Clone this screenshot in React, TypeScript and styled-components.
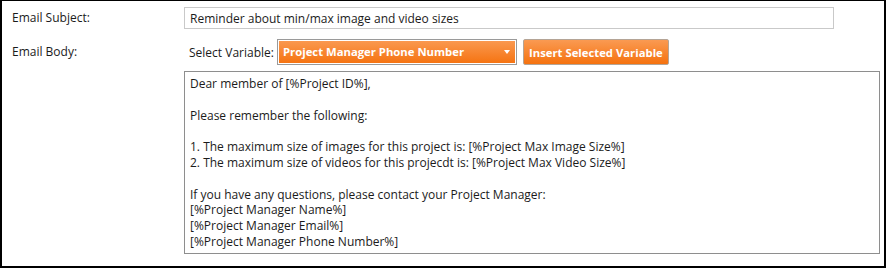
import React, { useState } from 'react';
import styled, { createGlobalStyle } from 'styled-components';

const GlobalStyle = createGlobalStyle`
  html, body {
    margin: 0;
    padding: 0;
    background: #ffffff;
  }
  body {
    font-family: "Open Sans", "Liberation Sans", sans-serif;
    font-size: 12px;
    color: #1b1b1b;
  }
`;

const Panel = styled.div`
  box-sizing: border-box;
  width: 886px;
  height: 268px;
  border: 2px solid #000;
  border-top-width: 1px;
  padding: 6px 5px 0 10px;
  display: grid;
  grid-template-columns: 172px 1fr;
  row-gap: 10px;
  align-items: start;
  align-content: start;
`;

const Label = styled.div<{ $offset?: number }>`
  line-height: 22px;
  height: 22px;
  padding-top: ${(p) => p.$offset ?? 0}px;
`;

const SubjectInput = styled.input`
  box-sizing: border-box;
  width: 650px;
  height: 22px;
  border: 1px solid #c9c9c9;
  padding: 0 5px;
  font: inherit;
  color: inherit;
  outline: none;
`;

const BodyColumn = styled.div`
  display: flex;
  flex-direction: column;
  gap: 6px;
`;

const Toolbar = styled.div`
  display: flex;
  align-items: center;
  height: 26px;
  padding-left: 5px;
`;

const ToolbarLabel = styled.span`
  width: 88px;
`;

const SelectBox = styled.div`
  position: relative;
  box-sizing: border-box;
  width: 240px;
  height: 26px;
  border: 1px solid #9a9a9a;
  box-shadow: inset 0 0 0 1px #ffffff;
  background: linear-gradient(#fa9a52, #f5720f);
  color: #fff;
  font-size: 11.3px;
  font-weight: 700;
  line-height: 24px;
  padding-left: 5px;
`;

const Caret = styled.span`
  position: absolute;
  right: 6px;
  top: 10px;
  width: 0;
  height: 0;
  border-left: 3px solid transparent;
  border-right: 3px solid transparent;
  border-top: 4px solid #fff;
`;

const OrangeButton = styled.button`
  box-sizing: border-box;
  margin-left: 6px;
  height: 26px;
  padding: 0 5px;
  border: 1px solid #b4a496;
  border-radius: 2px;
  background: linear-gradient(#fa9a52, #f5720f);
  color: #fff;
  font: inherit;
  font-size: 11.3px;
  font-weight: 700;
  cursor: pointer;
`;

const BodyArea = styled.div`
  box-sizing: border-box;
  width: 696px;
  height: 183px;
  border: 1px solid #8e8e8e;
  padding: 4px 5px;
  line-height: 15.8px;
  white-space: pre-wrap;
  overflow: hidden;
`;

const bodyText = `Dear member of [%Project ID%],

Please remember the following:

1. The maximum size of images for this project is: [%Project Max Image Size%]
2. The maximum size of videos for this projecdt is: [%Project Max Video Size%]

If you have any questions, please contact your Project Manager:
[%Project Manager Name%]
[%Project Manager Email%]
[%Project Manager Phone Number%]`;

const App: React.FC = () => {
  const [subject, setSubject] = useState('Reminder about min/max image and video sizes');

  return (
    <>
      <GlobalStyle />
      <Panel>
        <Label>Email Subject:</Label>
        <SubjectInput value={subject} onChange={(e) => setSubject(e.target.value)} />
        <Label $offset={2}>Email Body:</Label>
        <BodyColumn>
          <Toolbar>
            <ToolbarLabel>Select Variable:</ToolbarLabel>
            <SelectBox>
              Project Manager Phone Number
              <Caret />
            </SelectBox>
            <OrangeButton>Insert Selected Variable</OrangeButton>
          </Toolbar>
          <BodyArea>{bodyText}</BodyArea>
        </BodyColumn>
      </Panel>
    </>
  );
};

export default App;
